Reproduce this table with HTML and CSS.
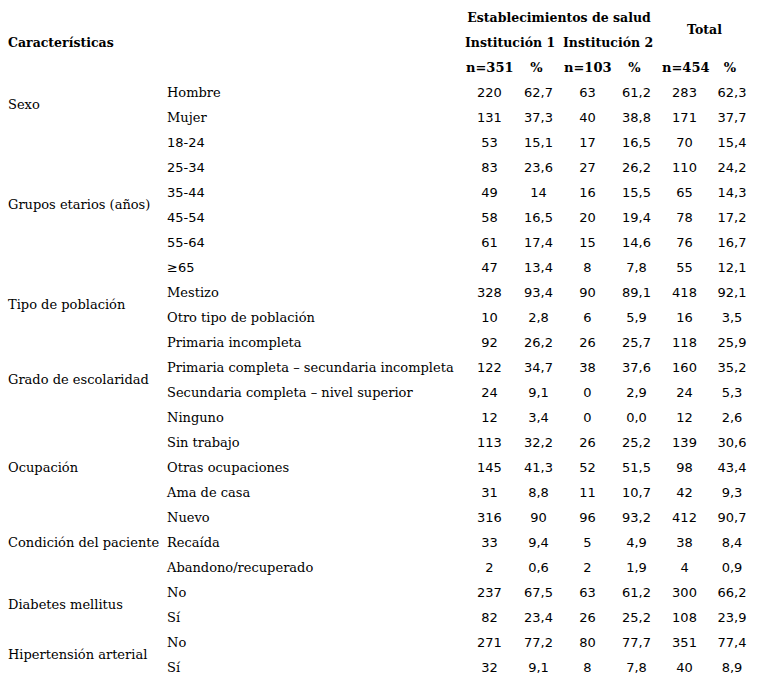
FILE: index.html
```html
<!DOCTYPE html>
<html lang="es">
<head>
<meta charset="utf-8">
<title>Características</title>
<link rel="stylesheet" href="styles.css">
</head>
<body>
<table class="tbl">
<colgroup>
<col class="c-char"><col class="c-cat"><col class="c-n"><col class="c-n"><col class="c-n"><col class="c-n"><col class="c-n2"><col class="c-n3">
</colgroup>
<thead>
<tr><th rowspan="3" class="hl">Características</th><th rowspan="3"></th><th colspan="4">Establecimientos de salud</th><th colspan="2" rowspan="2">Total</th></tr>
<tr><th colspan="2">Institución 1</th><th colspan="2">Institución 2</th></tr>
<tr class="sub"><th>n=351</th><th>%</th><th>n=103</th><th>%</th><th>n=454</th><th>%</th></tr>
</thead>
<tbody>
<tr><td rowspan="2">Sexo</td><td>Hombre</td><td class="n">220</td><td class="n">62,7</td><td class="n">63</td><td class="n">61,2</td><td class="n">283</td><td class="n">62,3</td></tr>
<tr><td>Mujer</td><td class="n">131</td><td class="n">37,3</td><td class="n">40</td><td class="n">38,8</td><td class="n">171</td><td class="n">37,7</td></tr>
<tr><td rowspan="6">Grupos etarios (años)</td><td class="num">18-24</td><td class="n">53</td><td class="n">15,1</td><td class="n">17</td><td class="n">16,5</td><td class="n">70</td><td class="n">15,4</td></tr>
<tr><td class="num">25-34</td><td class="n">83</td><td class="n">23,6</td><td class="n">27</td><td class="n">26,2</td><td class="n">110</td><td class="n">24,2</td></tr>
<tr><td class="num">35-44</td><td class="n">49</td><td class="n">14</td><td class="n">16</td><td class="n">15,5</td><td class="n">65</td><td class="n">14,3</td></tr>
<tr><td class="num">45-54</td><td class="n">58</td><td class="n">16,5</td><td class="n">20</td><td class="n">19,4</td><td class="n">78</td><td class="n">17,2</td></tr>
<tr><td class="num">55-64</td><td class="n">61</td><td class="n">17,4</td><td class="n">15</td><td class="n">14,6</td><td class="n">76</td><td class="n">16,7</td></tr>
<tr><td class="num">≥65</td><td class="n">47</td><td class="n">13,4</td><td class="n">8</td><td class="n">7,8</td><td class="n">55</td><td class="n">12,1</td></tr>
<tr><td rowspan="2">Tipo de población</td><td>Mestizo</td><td class="n">328</td><td class="n">93,4</td><td class="n">90</td><td class="n">89,1</td><td class="n">418</td><td class="n">92,1</td></tr>
<tr><td>Otro tipo de población</td><td class="n">10</td><td class="n">2,8</td><td class="n">6</td><td class="n">5,9</td><td class="n">16</td><td class="n">3,5</td></tr>
<tr><td rowspan="4">Grado de escolaridad</td><td>Primaria incompleta</td><td class="n">92</td><td class="n">26,2</td><td class="n">26</td><td class="n">25,7</td><td class="n">118</td><td class="n">25,9</td></tr>
<tr><td>Primaria completa – secundaria incompleta</td><td class="n">122</td><td class="n">34,7</td><td class="n">38</td><td class="n">37,6</td><td class="n">160</td><td class="n">35,2</td></tr>
<tr><td>Secundaria completa – nivel superior</td><td class="n">24</td><td class="n">9,1</td><td class="n">0</td><td class="n">2,9</td><td class="n">24</td><td class="n">5,3</td></tr>
<tr><td>Ninguno</td><td class="n">12</td><td class="n">3,4</td><td class="n">0</td><td class="n">0,0</td><td class="n">12</td><td class="n">2,6</td></tr>
<tr><td rowspan="3">Ocupación</td><td>Sin trabajo</td><td class="n">113</td><td class="n">32,2</td><td class="n">26</td><td class="n">25,2</td><td class="n">139</td><td class="n">30,6</td></tr>
<tr><td>Otras ocupaciones</td><td class="n">145</td><td class="n">41,3</td><td class="n">52</td><td class="n">51,5</td><td class="n">98</td><td class="n">43,4</td></tr>
<tr><td>Ama de casa</td><td class="n">31</td><td class="n">8,8</td><td class="n">11</td><td class="n">10,7</td><td class="n">42</td><td class="n">9,3</td></tr>
<tr><td rowspan="3">Condición del paciente</td><td>Nuevo</td><td class="n">316</td><td class="n">90</td><td class="n">96</td><td class="n">93,2</td><td class="n">412</td><td class="n">90,7</td></tr>
<tr><td>Recaída</td><td class="n">33</td><td class="n">9,4</td><td class="n">5</td><td class="n">4,9</td><td class="n">38</td><td class="n">8,4</td></tr>
<tr><td>Abandono/recuperado</td><td class="n">2</td><td class="n">0,6</td><td class="n">2</td><td class="n">1,9</td><td class="n">4</td><td class="n">0,9</td></tr>
<tr><td rowspan="2">Diabetes mellitus</td><td>No</td><td class="n">237</td><td class="n">67,5</td><td class="n">63</td><td class="n">61,2</td><td class="n">300</td><td class="n">66,2</td></tr>
<tr><td>Sí</td><td class="n">82</td><td class="n">23,4</td><td class="n">26</td><td class="n">25,2</td><td class="n">108</td><td class="n">23,9</td></tr>
<tr><td rowspan="2">Hipertensión arterial</td><td>No</td><td class="n">271</td><td class="n">77,2</td><td class="n">80</td><td class="n">77,7</td><td class="n">351</td><td class="n">77,4</td></tr>
<tr><td>Sí</td><td class="n">32</td><td class="n">9,1</td><td class="n">8</td><td class="n">7,8</td><td class="n">40</td><td class="n">8,9</td></tr>
</tbody>
</table>
</body>
</html>
```
FILE: styles.css
```css
html, body {
  margin: 0;
  padding: 0;
  background: #ffffff;
}
body {
  color: #000000;
  font-family: "DejaVu Serif", "Liberation Serif", serif;
  font-size: 13px;
}
.tbl {
  margin: 5px 0 0 4px;
  border-collapse: collapse;
  table-layout: fixed;
  width: 752px;
}
.c-char { width: 159px; }
.c-cat { width: 302px; }
.c-n { width: 49px; }
.c-n2 { width: 47px; }
.c-n3 { width: 48px; }
.tbl th, .tbl td {
  height: 25px;
  padding: 0 4px;
  vertical-align: middle;
  white-space: nowrap;
  line-height: 16px;
}
.tbl th {
  font-weight: bold;
  font-size: 12.5px;
  text-align: center;
  padding: 0 8px 0 0;
}
.tbl th.hl {
  text-align: left;
  padding: 0 4px;
}
.tbl .sub th {
  font-size: 13px;
  padding: 0 5px 0 1px;
}
.tbl td {
  text-align: left;
}
.tbl td.n {
  text-align: center;
  font-family: "DejaVu Sans", "Liberation Sans", sans-serif;
  font-size: 13px;
}
.tbl td.num {
  font-family: "DejaVu Sans", "Liberation Sans", sans-serif;
  font-size: 13px;
}
```
